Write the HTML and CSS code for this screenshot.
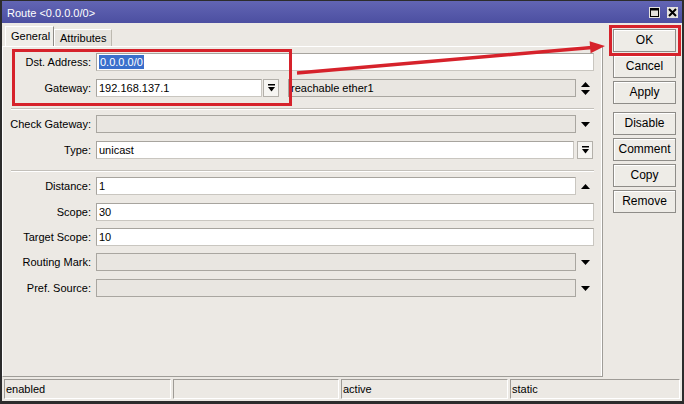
FILE: index.html
```html
<!DOCTYPE html>
<html>
<head>
<meta charset="utf-8">
<title>Route</title>
<link rel="stylesheet" href="styles.css">
</head>
<body>
<div class="win">
  <div class="titlebar">
    <span class="title">Route &lt;0.0.0.0/0&gt;</span>
    <div class="tbtns">
      <span class="tbtn"><svg width="9" height="9" viewBox="0 0 9 9"><rect x="0.5" y="0.5" width="8" height="8" fill="none" stroke="#000"/><rect x="0" y="0" width="9" height="2.5" fill="#000"/></svg></span>
      <span class="tbtn"><svg width="9" height="9" viewBox="0 0 9 9"><path d="M1 1 L8 8 M8 1 L1 8" stroke="#000" stroke-width="2"/></svg></span>
    </div>
  </div>
  <div class="main">
    <div class="left">
      <div class="tabs">
        <div class="tab active">General</div>
        <div class="tab">Attributes</div>
      </div>
      <div class="panel">
        <div class="row first">
          <span class="lbl">Dst. Address:</span>
          <div class="field"><span class="sel">0.0.0.0/0</span></div>
        </div>
        <div class="row">
          <span class="lbl">Gateway:</span>
          <div class="field gw">192.168.137.1</div>
          <div class="ddbtn gwbtn"><svg width="7" height="8" viewBox="0 0 7 8"><rect x="0" y="0" width="7" height="1.5" fill="#000"/><polygon points="0,3 7,3 3.5,7.5" fill="#000"/></svg></div>
          <div class="field dis reach">reachable ether1</div>
          <div class="arr"><svg width="9" height="13" viewBox="0 0 9 13"><polygon points="0,5 9,5 4.5,0" fill="#000"/><polygon points="0,8 9,8 4.5,13" fill="#000"/></svg></div>
        </div>
        <div class="sep"></div>
        <div class="row">
          <span class="lbl">Check Gateway:</span>
          <div class="field dis"></div>
          <div class="arr"><svg width="9" height="5" viewBox="0 0 9 5"><polygon points="0,0 9,0 4.5,5" fill="#000"/></svg></div>
        </div>
        <div class="row">
          <span class="lbl">Type:</span>
          <div class="field">unicast</div>
          <div class="ddbtn typebtn"><svg width="7" height="8" viewBox="0 0 7 8"><rect x="0" y="0" width="7" height="1.5" fill="#000"/><polygon points="0,3 7,3 3.5,7.5" fill="#000"/></svg></div>
        </div>
        <div class="sep"></div>
        <div class="row">
          <span class="lbl">Distance:</span>
          <div class="field">1</div>
          <div class="arr"><svg width="9" height="5" viewBox="0 0 9 5"><polygon points="0,5 9,5 4.5,0" fill="#000"/></svg></div>
        </div>
        <div class="row">
          <span class="lbl">Scope:</span>
          <div class="field">30</div>
        </div>
        <div class="row t7">
          <span class="lbl">Target Scope:</span>
          <div class="field">10</div>
        </div>
        <div class="row t7">
          <span class="lbl">Routing Mark:</span>
          <div class="field dis"></div>
          <div class="arr"><svg width="9" height="5" viewBox="0 0 9 5"><polygon points="0,0 9,0 4.5,5" fill="#000"/></svg></div>
        </div>
        <div class="row">
          <span class="lbl">Pref. Source:</span>
          <div class="field dis"></div>
          <div class="arr"><svg width="9" height="5" viewBox="0 0 9 5"><polygon points="0,0 9,0 4.5,5" fill="#000"/></svg></div>
        </div>
      </div>
    </div>
    <div class="buttons">
      <div class="btn first">OK</div>
      <div class="btn">Cancel</div>
      <div class="btn">Apply</div>
      <div class="btn gap">Disable</div>
      <div class="btn">Comment</div>
      <div class="btn">Copy</div>
      <div class="btn">Remove</div>
    </div>
  </div>
  <div class="status">
    <div class="sp w1">enabled</div>
    <div class="sp w2"></div>
    <div class="sp w3">active</div>
    <div class="sp w4">static</div>
  </div>
</div>
<svg class="anno" width="684" height="404" viewBox="0 0 684 404">
  <rect x="13.5" y="50.5" width="277" height="54" fill="none" stroke="#d6222b" stroke-width="3"/>
  <rect x="610.5" y="26.5" width="69" height="28" fill="none" stroke="#d6222b" stroke-width="3"/>
  <line x1="297" y1="73" x2="592" y2="47.5" stroke="#d6222b" stroke-width="3.5"/>
  <polygon points="605,46 590.6,53.3 589.6,41.3" fill="#d6222b"/>
</svg>
</body>
</html>
```

FILE: styles.css
```css
html, body {
  margin: 0;
  padding: 0;
}
body {
  position: relative;
  width: 684px;
  height: 404px;
  overflow: hidden;
  font-family: "Liberation Sans", Arial, sans-serif;
  font-size: 11px;
  color: #000;
  background: #ece9e4;
}
.win {
  width: 684px;
  height: 404px;
  box-sizing: border-box;
  border: 2px solid #2c2c2c;
  border-top-width: 1px;
  border-bottom-width: 3px;
  background: #ece9e4;
  display: flex;
  flex-direction: column;
}
.titlebar {
  height: 22px;
  flex: none;
  background: linear-gradient(to bottom, #6265b4, #4c4fa1);
  display: flex;
  align-items: center;
  justify-content: space-between;
  padding: 1px 4px 0 5px;
  box-sizing: border-box;
}
.title {
  color: #fff;
  font-size: 11px;
}
.tbtns {
  display: flex;
  gap: 7px;
}
.tbtn {
  width: 11px;
  height: 11px;
  background: #e4e2de;
  border: 0;
  display: flex;
  align-items: center;
  justify-content: center;
}
.main {
  flex: 1;
  display: flex;
  min-height: 0;
}
.left {
  width: 601px;
  display: flex;
  flex-direction: column;
}
.tabs {
  display: flex;
  align-items: flex-end;
  padding: 3px 0 0 3px;
  height: 23px;
  box-sizing: border-box;
}
.tab {
  height: 17px;
  line-height: 16px;
  padding: 0 5px;
  box-sizing: border-box;
  border: 1px solid #bdb9b0;
  border-bottom: none;
  border-top-color: #fff;
  border-left-color: #fff;
  background: #e6e3dd;
  margin-bottom: 0;
}
.tab.active {
  height: 20px;
  line-height: 19px;
  width: 49px;
  padding: 0 0 0 5px;
  background: #f0eee9;
  border-right-color: #8f8c86;
}
.panel {
  flex: 1;
  border-top: 1px solid #fff;
  border-right: 1px solid #9f9d98;
  border-left: 1px solid #fff;
  border-bottom: 1px solid #9f9d98;
  box-shadow: inset -1px 0 0 #fff;
}
.row {
  display: flex;
  align-items: center;
  height: 18px;
  margin-top: 8px;
  padding-right: 8px;
}
.row.first {
  margin-top: 6px;
}
.row.t7 {
  margin-top: 7px;
}
.sep + .row {
  margin-top: 0;
}
.lbl {
  width: 88px;
  flex: none;
  text-align: right;
  white-space: nowrap;
}
.field {
  flex: 1;
  height: 18px;
  box-sizing: border-box;
  margin-left: 5px;
  border: 1px solid #a7a49e;
  border-bottom-color: #c9c6c0;
  border-right-color: #c9c6c0;
  background: #fff;
  line-height: 16px;
  padding-left: 2px;
  white-space: nowrap;
  overflow: hidden;
}
.field.dis {
  background: #e9e6e1;
  border-color: #a9a6a0;
}
.field.gw {
  flex: none;
  width: 166px;
}
.field.reach {
  margin-left: 9px;
}
.sel {
  background: #3a6fcc;
  color: #fff;
  padding: 0 1px;
  display: inline-block;
  line-height: 14px;
}
.ddbtn {
  flex: none;
  width: 16px;
  height: 18px;
  box-sizing: border-box;
  border: 1px solid #b3b0aa;
  background: #f6f5f2;
  display: flex;
  align-items: center;
  justify-content: center;
}
.gwbtn {
  margin-left: 1px;
}
.typebtn {
  margin-left: 3px;
  margin-right: 1px;
}
.arr {
  flex: none;
  width: 18px;
  height: 18px;
  display: flex;
  align-items: center;
  justify-content: center;
}
.sep {
  height: 1px;
  margin: 11px 8px 5px 8px;
  background: #c3c0ba;
  border-bottom: 1px solid #fff;
}
.buttons {
  width: 63px;
  margin-left: 10px;
  display: flex;
  flex-direction: column;
}
.btn {
  height: 23px;
  box-sizing: border-box;
  border: 1px solid #8e8c88;
  box-shadow: inset 1px 1px 0 #fff;
  background: #eeece7;
  text-align: center;
  line-height: 21px;
  font-size: 12px;
  margin-top: 3px;
}
.btn.first {
  margin-top: 6px;
}
.btn.gap {
  margin-top: 8px;
}
.status {
  flex: none;
  height: 20px;
  margin: 2px 2px 2px 2px;
  display: flex;
  gap: 2px;
}
.sp {
  box-sizing: border-box;
  height: 20px;
  border: 1px solid #fff;
  border-top-color: #9e9b96;
  border-left-color: #9e9b96;
  line-height: 18px;
  padding-left: 1px;
  white-space: nowrap;
}
.w1 { width: 167px; }
.w2 { width: 166px; }
.w3 { width: 167px; }
.w4 { flex: 1; }
.anno {
  position: absolute;
  left: 0;
  top: 0;
  pointer-events: none;
}
```
